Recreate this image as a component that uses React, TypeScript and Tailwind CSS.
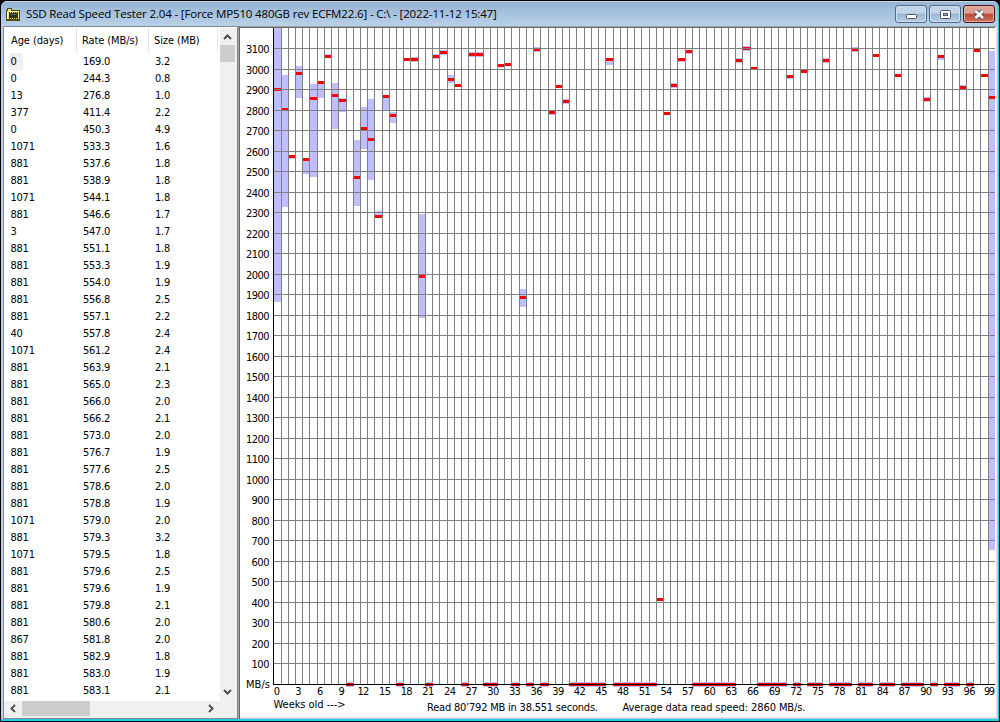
const rows = `0 169.0 3.2
0 244.3 0.8
13 276.8 1.0
377 411.4 2.2
0 450.3 4.9
1071 533.3 1.6
881 537.6 1.8
881 538.9 1.8
1071 544.1 1.8
881 546.6 1.7
3 547.0 1.7
881 551.1 1.8
881 553.3 1.9
881 554.0 1.9
881 556.8 2.5
881 557.1 2.2
40 557.8 2.4
1071 561.2 2.4
881 563.9 2.1
881 565.0 2.3
881 566.0 2.0
881 566.2 2.1
881 573.0 2.0
881 576.7 1.9
881 577.6 2.5
881 578.6 2.0
881 578.8 1.9
1071 579.0 2.0
881 579.3 3.2
1071 579.5 1.8
881 579.6 2.5
881 579.6 1.9
881 579.8 2.1
881 580.6 2.0
867 581.8 2.0
881 582.9 1.8
881 583.0 1.9
881 583.1 2.1`
  .split("\n")
  .map((line) => line.split(" "));

// week, top of range, bottom of range, average marker
const samples: [number, number, number, number][] = [
  [0, 1, 275, 61],
  [1, 48, 180, 81],
  [2, 128, 132, 128],
  [3, 39, 71, 45],
  [4, 131, 147, 131],
  [5, 57, 150, 70],
  [6, 54, 71, 54],
  [7, 27, 30, 28],
  [8, 56, 102, 67],
  [9, 71, 85, 72],
  [11, 113, 179, 149],
  [12, 80, 122, 100],
  [13, 72, 153, 111],
  [14, 184, 191, 188],
  [15, 68, 83, 68],
  [16, 85, 96, 87],
  [18, 31, 34, 31],
  [19, 30, 35, 31],
  [20, 187, 291, 248],
  [22, 27, 32, 28],
  [23, 23, 28, 24],
  [24, 48, 56, 51],
  [25, 57, 60, 57],
  [27, 25, 30, 26],
  [28, 25, 30, 26],
  [31, 37, 40, 37],
  [32, 36, 39, 36],
  [34, 262, 280, 269],
  [36, 20, 25, 21],
  [38, 84, 88, 84],
  [39, 58, 61, 58],
  [40, 72, 77, 73],
  [46, 31, 38, 31],
  [53, 571, 574, 571],
  [54, 85, 88, 85],
  [55, 56, 61, 57],
  [56, 31, 35, 31],
  [57, 23, 27, 23],
  [64, 31, 36, 32],
  [65, 19, 24, 20],
  [66, 40, 43, 40],
  [71, 48, 52, 48],
  [73, 43, 46, 43],
  [76, 31, 36, 32],
  [80, 20, 25, 21],
  [83, 27, 30, 27],
  [86, 47, 50, 47],
  [90, 70, 75, 71],
  [92, 28, 33, 28],
  [95, 58, 62, 59],
  [97, 22, 25, 22],
  [98, 47, 50, 47],
  [99, 24, 523, 69],
];

// weeks without any data sit on the base line
const sampled = new Set(samples.map(([week]) => week));
const weeks = Array.from({ length: 100 }, (_, i) => i);
const rates = Array.from({ length: 31 }, (_, i) => i + 1);

const BASE = 657;
const weekX = (week: number) => Math.floor(33.9 + week * 7.215);
const rateY = (rate: number) => Math.floor(BASE - rate * 20.5);

export default function App() {
  return (
    <div className="w-[1000px] h-[722px] overflow-hidden bg-black pl-px pt-px select-none text-black text-[11px]">
      <div className="flex flex-col w-[998px] h-[720px] rounded-t-md overflow-hidden bg-[#b9d1ea] border-r border-b-2 border-[#27c8e4]">
        <TitleBar />
        <div className="flex h-[693px] pl-0.5">
          <FileList />
          <div className="w-px bg-[#a0a0a0]" />
          <div className="w-px bg-[#696969]" />
          <main className="w-[757px] h-[692px] bg-white border-t border-t-[#a0a0a0] border-r border-b border-r-[#e3e3e3] border-b-[#e3e3e3]">
            <SpeedChart />
          </main>
        </div>
      </div>
    </div>
  );
}

function TitleBar() {
  return (
    <header className="flex h-[25px] shrink-0 items-start bg-linear-to-b from-[#98b4d2] to-[#b9d1ea] border-t border-[#c6d8ea] pl-[5px] pr-[3px]">
      <AppIcon />
      <h1 className="ml-[3px] mt-1 leading-4 text-[11.5px] tracking-[-0.15px] whitespace-nowrap font-['Open_Sans','Noto_Sans',sans-serif]">
        SSD Read Speed Tester 2.04 - [Force MP510 480GB rev ECFM22.6] - C:\ - [2022-11-12 15:47]
      </h1>
      <div className="ml-auto mt-[3px] flex gap-[2px]">
        <CaptionButton>
          <rect x="10.5" y="8.5" width="10" height="4" rx="1" fill="#fff" stroke="#535666" />
        </CaptionButton>
        <CaptionButton>
          <rect x="10.5" y="4.5" width="10" height="8" rx="1" fill="#fff" stroke="#535666" />
          <rect x="13.5" y="7.5" width="4" height="2" fill="#9bb7d5" stroke="#535666" />
        </CaptionButton>
        <CaptionButton close>
          <path d="M11.500 5l7.500 7m0-7l-7.500 7" stroke="#535666" strokeWidth="4.600" />
          <path d="M11.500 5l7.500 7m0-7l-7.500 7" stroke="#fff" strokeWidth="2.600" />
        </CaptionButton>
      </div>
    </header>
  );
}

function CaptionButton({ close, children }: { close?: boolean; children: React.ReactNode }) {
  return (
    <button
      className={
        close
          ? "w-8 h-[18px] rounded-[3px] border border-[#43141c] bg-linear-to-b from-[#dca096] from-45% via-[#bc4a36] via-50% to-[#d0705a] shadow-[inset_0_0_0_1px_#e5aea5]"
          : "w-8 h-[18px] rounded-[3px] border border-[#536b8a] bg-linear-to-b from-[#c1d3e7] from-45% via-[#9ab6d4] via-50% to-[#b5cee7] shadow-[inset_0_0_0_1px_#cfdff0]"
      }
    >
      <svg width="30" height="16" viewBox="0 0 30 16" fill="none">
        {children}
      </svg>
    </button>
  );
}

function AppIcon() {
  return (
    <svg className="mt-[5px] mr-px" width="16" height="15" viewBox="0 0 16 15" shapeRendering="crispEdges">
      <path d="M0 3h1V1h5v2h8v11H0z" fill="#4d4a1c" />
      <path d="M1 4h1V2h3v2h8v8H1z" fill="#f3df77" />
      <path d="M1 4h12v1H2v7H1z" fill="#fff6b8" />
      <path d="M3.500 5v7M5.500 5v7M7.500 5v7M9.500 5v7M11.500 5v7" stroke="#3a3a3a" />
      <rect x="3" y="6" width="9" height="5" fill="#303030" />
      <rect x="4" y="7" width="7" height="1" fill="#5a5a5a" />
    </svg>
  );
}

function FileList() {
  return (
    <section className="w-[235px] h-[693px] bg-white border border-[#828790] pt-px font-['DejaVu_Sans_Condensed','DejaVu_Sans',sans-serif]">
      <div className="flex h-[673px]">
        <div className="w-[216px] overflow-hidden">
          <div className="flex h-6 mb-px leading-[26px] whitespace-nowrap tracking-[-0.1px]">
            <div className="w-[73px] pl-[7px] border-r border-[#e5e5e5]">Age (days)</div>
            <div className="w-[72px] pl-[5px] border-r border-[#e5e5e5]">Rate (MB/s)</div>
            <div className="w-[69px] pl-[5px] border-r border-[#e5e5e5]">Size (MB)</div>
          </div>
          {rows.map(([age, rate, size], i) => (
            <div key={i} className="flex h-[17px] leading-[18px] tracking-[-0.25px]">
              <div className="w-[73px] pl-[5px]">
                <span className={i === 0 ? "block w-[14px] h-[17px] pl-[1.5px] bg-[#f0f0f0]" : "pl-[1.5px]"}>
                  {age}
                </span>
              </div>
              <div className="w-[72px] pl-[6px]">{rate}</div>
              <div className="pl-[6px]">{size}</div>
            </div>
          ))}
        </div>
        <div className="flex flex-col w-[17px] bg-[#f0f0f0]">
          <Arrow d="M4 11l3.500-3.500L11 11" />
          <div className="h-[17px] w-[15px] bg-[#cdcdcd]" />
          <div className="mt-auto">
            <Arrow d="M4 6l3.500 3.500L11 6" />
          </div>
        </div>
      </div>
      <div className="flex h-[17px] bg-[#f0f0f0]">
        <Arrow d="M11 4L7.500 7.500L11 11" />
        <div className="ml-px w-[68px] h-[15px] bg-[#cdcdcd]" />
        <div className="ml-auto mr-[17px]">
          <Arrow d="M6 4l3.500 3.500L6 11" />
        </div>
      </div>
    </section>
  );
}

function Arrow({ d }: { d: string }) {
  return (
    <svg width="17" height="17" viewBox="0 0 17 17" fill="none" stroke="#505050" strokeWidth="2">
      <path d={d} />
    </svg>
  );
}

function SpeedChart() {
  return (
    <svg
      width="755"
      height="690"
      viewBox="0 0 755 690"
      className="font-['DejaVu_Sans_Condensed','DejaVu_Sans',sans-serif]"
    >
      <g shapeRendering="crispEdges">
        {samples.map(([week, top, bottom, average]) => (
          <g key={week}>
            <rect x={weekX(week)} y={top} width={weekX(week + 1) - weekX(week)} height={bottom - top} fill="#bfbfff" />
            <rect x={weekX(week)} y={average} width={weekX(week + 1) - weekX(week)} height="3" fill="#f00" />
          </g>
        ))}
        {rates.map((rate) => (
          <rect key={rate} x="34" y={rateY(rate)} width="721" height="1" fill="#808080" />
        ))}
        {weeks.map((week) => (
          <rect key={week} x={weekX(week)} y="0" width="1" height={BASE} fill="#808080" />
        ))}
        {weeks
          .filter((week) => !sampled.has(week))
          .map((week) => (
            <g key={week}>
              <rect x={weekX(week)} y={BASE - 2} width={weekX(week + 1) - weekX(week) + 1} height="5" fill="#bfbfff" />
              <rect x={weekX(week)} y={BASE - 1} width={weekX(week + 1) - weekX(week) + 1} height="3" fill="#f00" />
            </g>
          ))}
        <rect x="33" y="0" width="1" height={BASE + 1} fill="#000" />
        <rect x="33" y={BASE} width="722" height="1" fill="#000" />
        <rect x="0" y="0" width="755" height="1" fill="#696969" />
      </g>
      {rates.map((rate) => (
        <text key={rate} x="29.500" y={rateY(rate) + 5} textAnchor="end" textLength={rate > 9 ? 23.5 : 18}>
          {rate * 100}
        </text>
      ))}
      <text x="6" y={BASE + 4} textLength="24">
        MB/s
      </text>
      {weeks
        .filter((week) => week % 3 === 0 && week < 99)
        .map((week) => (
          <text key={week} x={36.8 + week * 7.215} y="668" textAnchor="middle" textLength={week > 9 ? 12 : 6}>
            {week}
          </text>
        ))}
      <text x="744" y="668" textLength="11">
        99
      </text>
      <text x="33.500" y="681" textLength="72">
        {"Weeks old --->"}
      </text>
      <text x="187" y="684" textLength="171">
        Read 80’792 MB in 38.551 seconds.
      </text>
      <text x="382.500" y="684" textLength="183">
        Average data read speed: 2860 MB/s.
      </text>
    </svg>
  );
}
